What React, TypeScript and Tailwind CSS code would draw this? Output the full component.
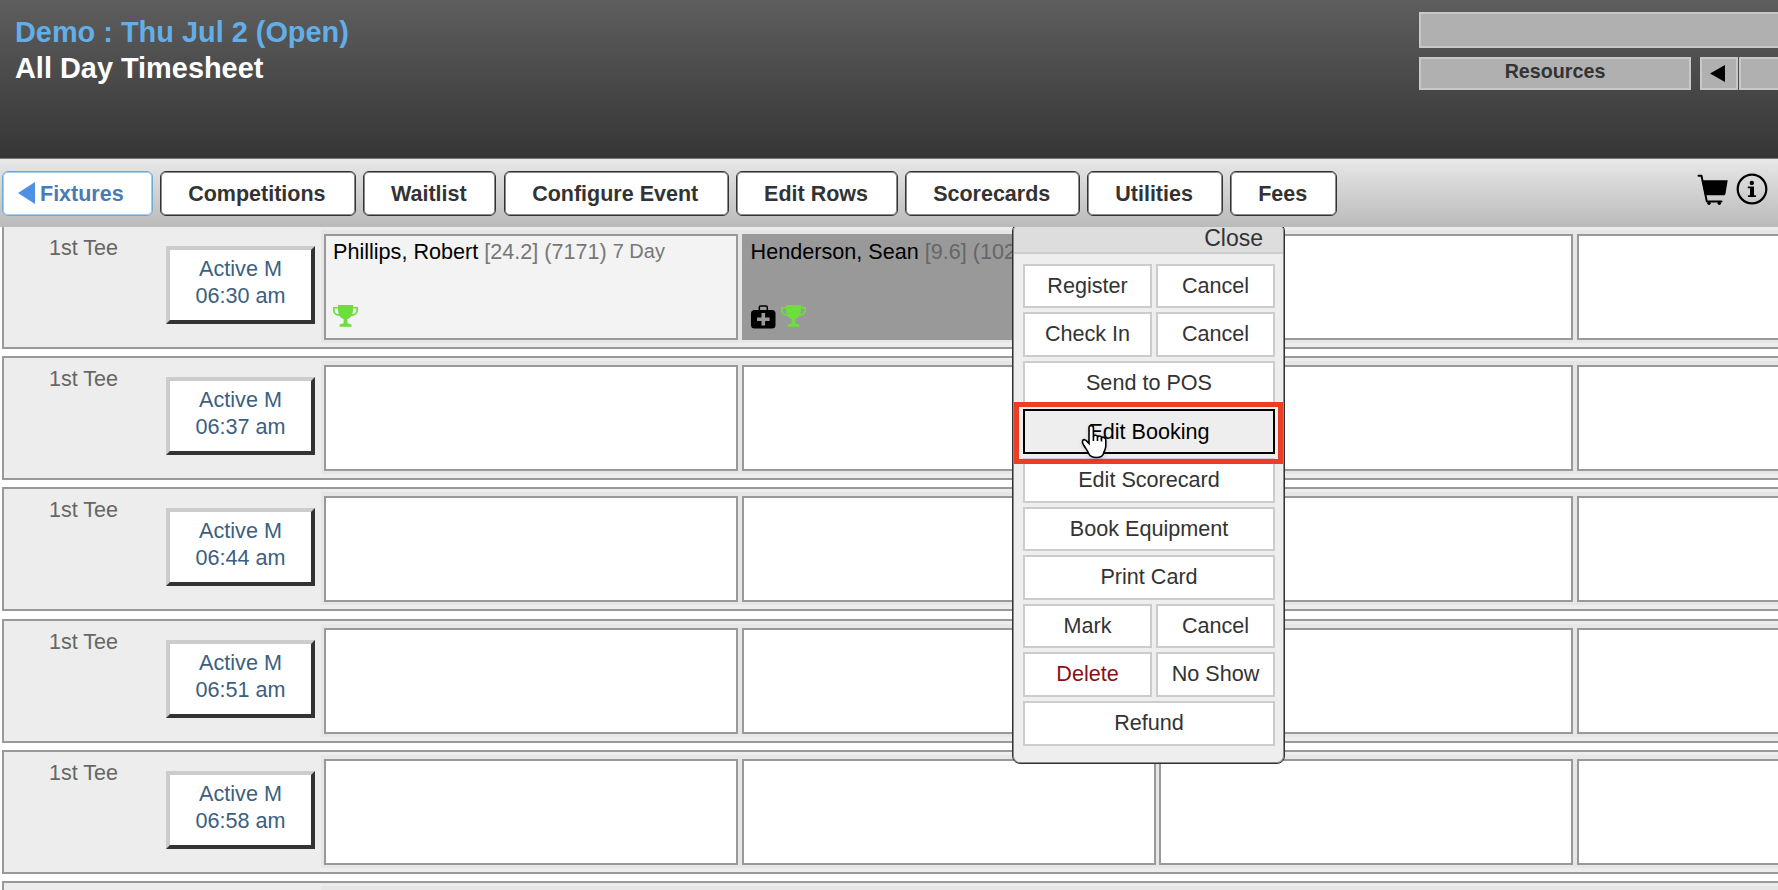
import type { ReactNode } from 'react';

type Player = {
  name: string;
  info: string;
  type?: string;
  medical?: boolean;
  selected?: boolean;
};

type Row = {
  time?: string;
  players: (Player | null)[];
};

const empty = [null, null, null, null];

const rows: Row[] = [
  {
    time: '06:30 am',
    players: [
      { name: 'Phillips, Robert', info: '[24.2] (7171)', type: '7 Day' },
      { name: 'Henderson, Sean', info: '[9.6] (102', medical: true, selected: true },
      null,
      null,
    ],
  },
  { time: '06:37 am', players: empty },
  { time: '06:44 am', players: empty },
  { time: '06:51 am', players: empty },
  { time: '06:58 am', players: empty },
  { players: empty },
];

const tabs = [
  { label: 'Competitions', width: 'w-[196px]' },
  { label: 'Waitlist', width: 'w-[133px]' },
  { label: 'Configure Event', width: 'w-[225px]' },
  { label: 'Edit Rows', width: 'w-[162px]' },
  { label: 'Scorecards', width: 'w-[174.5px]' },
  { label: 'Utilities', width: 'w-[135.5px]' },
  { label: 'Fees', width: 'w-[107px]' },
];

const actions = [
  ['Register', 'Cancel'],
  ['Check In', 'Cancel'],
  ['Send to POS'],
  ['Edit Booking'],
  ['Edit Scorecard'],
  ['Book Equipment'],
  ['Print Card'],
  ['Mark', 'Cancel'],
  ['Delete', 'No Show'],
  ['Refund'],
];

function Trophy() {
  return (
    <svg width="25" height="22" viewBox="0 0 25 22" fill="#6fdc3f">
      <path d="M5 0h15v2h5v3.5c0 3-2.8 5.4-6.6 5.6-1 1.6-2.4 2.6-4 3v3.4c0 .9.7 1.2 1.7 1.3 1.6.1 2.4.7 2.4 2.2v.8H6.500V21c0-1.500.8-2.100 2.400-2.200 1-.1 1.700-.4 1.700-1.300v-3.400c-1.600-.4-3-1.400-4-3C2.800 10.900 0 8.500 0 5.500V2h5zM1.700 3.600v1.900c0 1.800 1.500 3.300 3.900 3.800C5.100 7.600 5 5.600 5 3.600zM20 3.600c0 2-.1 4-.6 5.700 2.400-.5 3.900-2 3.900-3.800V3.600z" />
    </svg>
  );
}

function Medkit() {
  return (
    <svg width="25" height="24" viewBox="0 0 25 24">
      <path d="M8.300 6V2.400c0-.8.5-1.300 1.300-1.300h5.400c.8 0 1.300.5 1.300 1.300V6" fill="none" stroke="#000" strokeWidth="1.500" />
      <rect y="5" width="24.500" height="18.500" rx="3.500" />
      <path d="M12.300 8v12.500M6 14.200h12.600" stroke="#999" strokeWidth="3.600" />
    </svg>
  );
}

function Cart() {
  return (
    <svg width="31" height="34" viewBox="0 0 31 34">
      <path d="M1.500 2.700h3L9.800 28.400H24.500" fill="none" stroke="#000" strokeWidth="2" strokeLinecap="round" strokeLinejoin="round" />
      <path d="M4.800 7.200h25.900l-2.200 13.200c-.2 1.300-1 1.800-2 1.800H8z" />
      <circle cx="12" cy="30.300" r="1.700" />
      <circle cx="22.300" cy="30.300" r="1.700" />
    </svg>
  );
}

function Info() {
  return (
    <svg width="32" height="32" viewBox="0 0 32 32">
      <circle cx="16" cy="16" r="14.300" fill="none" stroke="#000" strokeWidth="2.200" />
      <circle cx="15.800" cy="9.900" r="2.200" />
      <path d="M11.800 13.400h6.200v8.800h2v1.800h-8v-1.800h2v-7h-2.200z" />
    </svg>
  );
}

function Hand() {
  return (
    <svg width="28" height="36" viewBox="0 0 28 36" className="drop-shadow-sm">
      <path
        d="M8 3.800C8 .9 12.400.9 12.400 3.800v8.600c.6-1.800 4.100-1.600 4.100.5.700-1.500 4-1.200 4 .9.900-1.200 4.300-.6 4.300 2v6.200c0 3.300-1.600 4.900-2.100 6.800-.6 3.300-3.400 4.700-7.400 4.700-3.900 0-6.500-1.400-7.700-4.300-1.300-3-2.900-4.800-4.700-7.700-.9-1.500-1.800-2.800-1.500-4.200.5-2.400 3.500-2 4.700.2L8 19.500z"
        fill="#fff"
        stroke="#000"
        strokeWidth="1.600"
      />
      <path d="M12.400 12v5M16.500 12.800v4.200M20.500 13.800v3.700" stroke="#000" strokeWidth="1.600" />
    </svg>
  );
}

function HeaderButton({ className, children }: { className: string; children?: ReactNode }) {
  return (
    <div
      className={`flex shrink-0 items-center justify-center border-2 border-[#c8c8c8] bg-[#b0b0b0] text-[19.7px] font-bold text-[#333] ${className}`}
    >
      {children}
    </div>
  );
}

function Header() {
  return (
    <header className="flex h-[159px] justify-between border-b border-[#777] bg-linear-to-b from-[#5e5e5e] to-[#363636]">
      <div className="pt-[14px] pl-[15px] text-[28.9px] leading-[36px] font-bold">
        <h1 className="text-[#64aee8]">Demo : Thu Jul 2 (Open)</h1>
        <h2 className="text-white">All Day Timesheet</h2>
      </div>
      <div className="w-[359px] overflow-hidden pt-3">
        <HeaderButton className="h-9 w-[400px]" />
        <div className="mt-[9px] flex">
          <HeaderButton className="h-[33px] w-[272px] pb-[3px]">Resources</HeaderButton>
          <HeaderButton className="ml-[9px] h-[33px] w-[38px] pr-[3px]">
            <svg width="15" height="17" viewBox="0 0 15 17">
              <path d="M15 0v17L0 8.500z" />
            </svg>
          </HeaderButton>
          <HeaderButton className="ml-px h-[33px] w-[120px]" />
        </div>
      </div>
    </header>
  );
}

function Toolbar() {
  return (
    <nav className="relative z-20 flex h-[68px] bg-linear-to-b from-[#e8e8e8] to-[#bababa] pt-3 pl-[2px] text-[21.5px] font-bold text-[#333]">
      <div className="flex gap-[7.4px]">
        <button className="flex h-[45px] w-[150.5px] items-center rounded-md border border-[#6ca9df] bg-white pt-px pl-[15px] text-[#4a79b8] shadow-[inset_0_0_0_1px_#a9cbea]">
          <svg width="17" height="22" viewBox="0 0 17 22" className="mr-[5px] mb-[2px]">
            <path d="M17 0v22L0 11z" fill="#4f8fe4" />
          </svg>
          Fixtures
        </button>
        {tabs.map((tab) => (
          <button
            key={tab.label}
            className={`h-[45px] rounded-md border border-[#333] bg-white pt-px pr-[2px] shadow-[inset_0_0_0_1px_#8a8a8a] ${tab.width}`}
          >
            {tab.label}
          </button>
        ))}
      </div>
      <div className="mr-[10px] ml-auto flex gap-[8px] pt-[2px]">
        <Cart />
        <Info />
      </div>
    </nav>
  );
}

function Cell({ player }: { player: Player | null }) {
  if (!player) {
    return <div className="h-[106px] w-[414px] shrink-0 border-2 border-[#999] bg-white" />;
  }
  return (
    <div
      className={`flex h-[106px] w-[414px] shrink-0 flex-col justify-between border-2 border-[#999] pt-[3px] pb-[10px] pl-[7px] text-[21.6px] leading-[26px] whitespace-nowrap text-black ${
        player.selected ? 'bg-[#999]' : 'bg-[#f3f3f3]'
      }`}
    >
      <div>
        {player.name} <span className={player.selected ? 'text-[#666]' : 'text-[#777]'}>{player.info}</span>{' '}
        {player.type && <span className="relative -top-px text-[20px] text-[#777]">{player.type}</span>}
      </div>
      <div className="flex h-[23px] gap-[5px]">
        {player.medical && <Medkit />}
        <Trophy />
      </div>
    </div>
  );
}

function TimesheetRow({ row }: { row: Row }) {
  return (
    <div className="mb-[7.33px] ml-[2px] flex h-[124px] w-[1800px] border-2 border-[#999] bg-[#ededed]">
      <div className="w-[162px] shrink-0 pt-[8px] pr-[3px] text-center text-[21.5px] leading-[26px] text-[#666]">
        {row.time && '1st Tee'}
      </div>
      {row.time ? (
        <button className="mt-[19px] mr-px h-[78px] w-[149px] shrink-0 border-4 border-t-[#ccc] border-r-[#333] border-b-[#333] border-l-[#ccc] bg-white pb-[6px] text-[21.6px] leading-[27px] text-[#3b607f]">
          Active M
          <br />
          {row.time}
        </button>
      ) : (
        <div className="w-[150px] shrink-0" />
      )}
      <div className="mt-[3px] ml-[5px] flex h-[113px] shrink-0 gap-[3.6px] bg-[#e6e6e6] pt-1 pl-[3px]">
        {row.players.map((player, i) => (
          <Cell key={i} player={player} />
        ))}
      </div>
    </div>
  );
}

function ActionMenu() {
  return (
    <div className="absolute top-[-2px] left-[1012px] z-10 h-[541px] w-[273px] rounded-lg border border-[#333] bg-[#eee] p-px text-[21.6px] text-[#333] shadow-[inset_0_0_0_1px_#8a8a8a]">
      <div className="h-[29px] rounded-t-md border-b-2 border-[#ccc] bg-[#ddd] pr-[20px] text-right text-[23px] leading-[27px]">
        Close
      </div>
      <div className="mt-[10px] flex flex-col gap-[3.9px] pl-[9px]">
        {actions.map((labels, i) => (
          <div key={i} className="flex gap-1">
            {labels.map((label, j) => (
              <button
                key={label}
                className={`h-[44.7px] border-2 ${labels.length === 1 ? 'w-[252px]' : j === 0 ? 'w-[129px]' : 'w-[119px]'} ${
                  label === 'Edit Booking' ? 'border-black bg-[#eee] text-black' : 'border-[#ccc] bg-white'
                } ${label === 'Delete' ? 'text-[#8b1010]' : ''}`}
              >
                {label}
              </button>
            ))}
          </div>
        ))}
      </div>
      <div className="absolute top-[178.5px] left-[1px] h-[62px] w-[269px] border-[5px] border-[#ea3f25]" />
      <div className="absolute top-[200px] left-[68px]">
        <Hand />
      </div>
    </div>
  );
}

export default function App() {
  return (
    <div className="h-[890px] w-[1778px] overflow-hidden bg-white font-['Liberation_Sans',Arial,sans-serif]">
      <Header />
      <Toolbar />
      <main className="relative">
        <div className="-mt-[2.33px] overflow-x-clip">
          {rows.map((row, i) => (
            <TimesheetRow key={i} row={row} />
          ))}
        </div>
        <ActionMenu />
      </main>
    </div>
  );
}
